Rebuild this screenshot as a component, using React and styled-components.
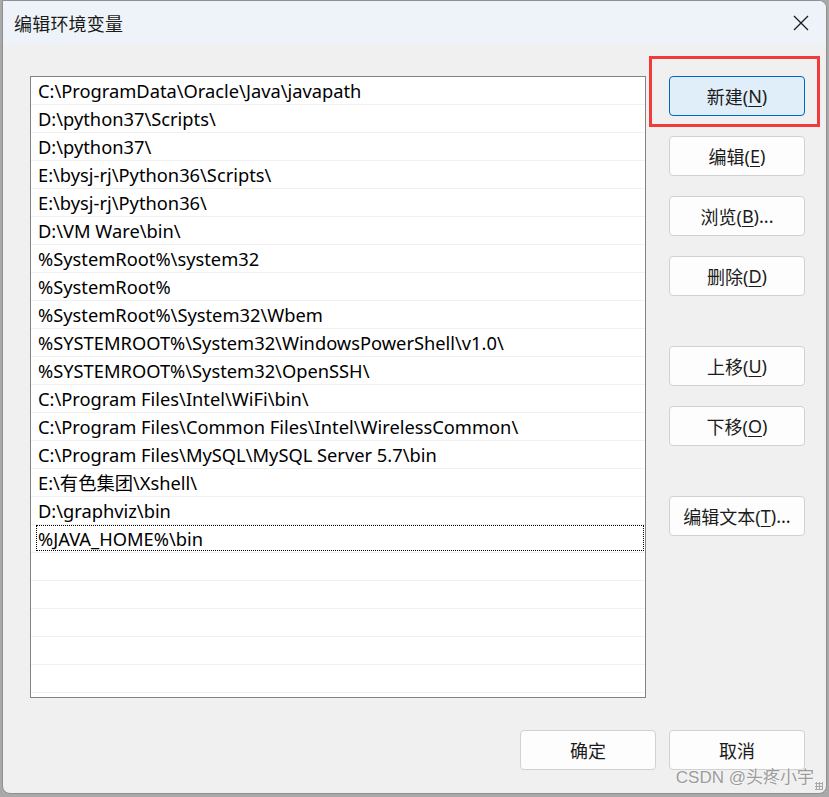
import React from 'react';
import styled, { createGlobalStyle } from 'styled-components';

const UI_FONT = `"Noto Sans", "Noto Sans CJK SC", sans-serif`;

const GlobalStyle = createGlobalStyle`
  * { box-sizing: border-box; }
  body {
    margin: 0;
    background: #a9a9a9;
    font-family: ${UI_FONT};
  }
`;

const Page = styled.div`
  width: 829px;
  height: 797px;
  overflow: hidden;
  padding-left: 2px;
`;

const Dialog = styled.div`
  position: relative;
  width: 825px;
  height: 794px;
  background: #f0f0f0;
  border: 1px solid #8f8f8f;
  border-radius: 0 8px 8px 8px;
  display: flex;
  flex-direction: column;
  overflow: hidden;
`;

const TitleBar = styled.div`
  height: 44px;
  flex-shrink: 0;
  background: #eef3f9;
  display: flex;
  align-items: center;
  justify-content: space-between;
  padding: 0 16px 0 11px;
`;

const Title = styled.div`
  font-size: 18px;
  color: #1b1b1b;
  letter-spacing: 0.2px;
`;

const CloseButton = styled.div`
  width: 18px;
  height: 18px;
  display: flex;
  align-items: center;
  justify-content: center;
`;

const Body = styled.div`
  display: flex;
  gap: 23px;
  padding: 31px 21px 0 27px;
`;

const ListBox = styled.div`
  width: 616px;
  height: 622px;
  background: #ffffff;
  border: 1px solid #838383;
  overflow: hidden;
`;

const Row = styled.div`
  position: relative;
  height: 28px;
  border-bottom: 1px solid #f0f0f0;
  padding-left: 7px;
  font-size: 18.3px;
  line-height: 27px;
  color: #000;
  white-space: nowrap;

  ${(p) =>
    p.focused &&
    `
    &::after {
      content: "";
      position: absolute;
      left: 5px;
      right: 1px;
      top: 0;
      bottom: 1px;
      border: 1px dotted #000;
    }
  `}
`;

const ButtonColumn = styled.div`
  display: flex;
  flex-direction: column;
  width: 136px;
`;

const Button = styled.button`
  width: 136px;
  height: 40px;
  margin-top: ${(p) => p.gap || 0}px;
  border-radius: 4px;
  border: 1px solid ${(p) => (p.primary ? '#0067c0' : '#d1d1d1')};
  background: ${(p) => (p.primary ? '#e0eef9' : '#fdfdfd')};
  font-family: ${UI_FONT};
  font-size: 18px;
  color: #1b1b1b;
  padding: 0;
  display: flex;
  align-items: center;
  justify-content: center;

  u {
    text-underline-offset: 3px;
    text-decoration-thickness: 1px;
  }
`;

const Highlight = styled.div`
  position: absolute;
  left: 646px;
  top: 55px;
  width: 171px;
  height: 71px;
  border: 3px solid #f23a3a;
  pointer-events: none;
`;

const Footer = styled.div`
  display: flex;
  justify-content: flex-end;
  gap: 13px;
  padding: 32px 21px 0 0;
`;

const Watermark = styled.div`
  position: absolute;
  right: 12px;
  bottom: 5px;
  font-family: "Liberation Sans", "Noto Sans CJK SC", sans-serif;
  font-size: 17px;
  color: #9c9c9c;
  text-shadow: 0 0 2px #ffffff;
  pointer-events: none;
`;

const Grip = styled.div`
  position: absolute;
  right: 3px;
  bottom: 3px;
  width: 8px;
  height: 8px;
  background-image: radial-gradient(#a8a8a8 1px, transparent 1.2px);
  background-size: 3px 3px;
`;

const paths = [
  'C:\\ProgramData\\Oracle\\Java\\javapath',
  'D:\\python37\\Scripts\\',
  'D:\\python37\\',
  'E:\\bysj-rj\\Python36\\Scripts\\',
  'E:\\bysj-rj\\Python36\\',
  'D:\\VM Ware\\bin\\',
  '%SystemRoot%\\system32',
  '%SystemRoot%',
  '%SystemRoot%\\System32\\Wbem',
  '%SYSTEMROOT%\\System32\\WindowsPowerShell\\v1.0\\',
  '%SYSTEMROOT%\\System32\\OpenSSH\\',
  'C:\\Program Files\\Intel\\WiFi\\bin\\',
  'C:\\Program Files\\Common Files\\Intel\\WirelessCommon\\',
  'C:\\Program Files\\MySQL\\MySQL Server 5.7\\bin',
  'E:\\有色集团\\Xshell\\',
  'D:\\graphviz\\bin',
  '%JAVA_HOME%\\bin',
];

const sideButtons = [
  { label: '新建', key: 'N', primary: true, gap: 0 },
  { label: '编辑', key: 'E', gap: 20 },
  { label: '浏览', key: 'B', tail: '...', gap: 20 },
  { label: '删除', key: 'D', gap: 20 },
  { label: '上移', key: 'U', gap: 50 },
  { label: '下移', key: 'O', gap: 20 },
  { label: '编辑文本', key: 'T', tail: '...', gap: 50 },
];

export default function App() {
  const rows = [...paths];
  while (rows.length < 23) rows.push('');

  return (
    <>
      <GlobalStyle />
      <Page>
        <Dialog>
          <TitleBar>
            <Title>编辑环境变量</Title>
            <CloseButton>
              <svg width="16" height="16" viewBox="0 0 16 16">
                <path d="M1 1 L15 15 M15 1 L1 15" stroke="#1b1b1b" strokeWidth="1.3" fill="none" />
              </svg>
            </CloseButton>
          </TitleBar>

          <Body>
            <ListBox>
              {rows.map((text, i) => (
                <Row key={i} focused={i === paths.length - 1}>
                  {text}
                </Row>
              ))}
            </ListBox>

            <ButtonColumn>
              {sideButtons.map((b) => (
                <Button key={b.key} primary={b.primary} gap={b.gap}>
                  {b.label}(<u>{b.key}</u>){b.tail}
                </Button>
              ))}
            </ButtonColumn>
          </Body>

          <Footer>
            <Button>确定</Button>
            <Button>取消</Button>
          </Footer>

          <Highlight />
          <Watermark>CSDN @头疼小宇</Watermark>
          <Grip />
        </Dialog>
      </Page>
    </>
  );
}
